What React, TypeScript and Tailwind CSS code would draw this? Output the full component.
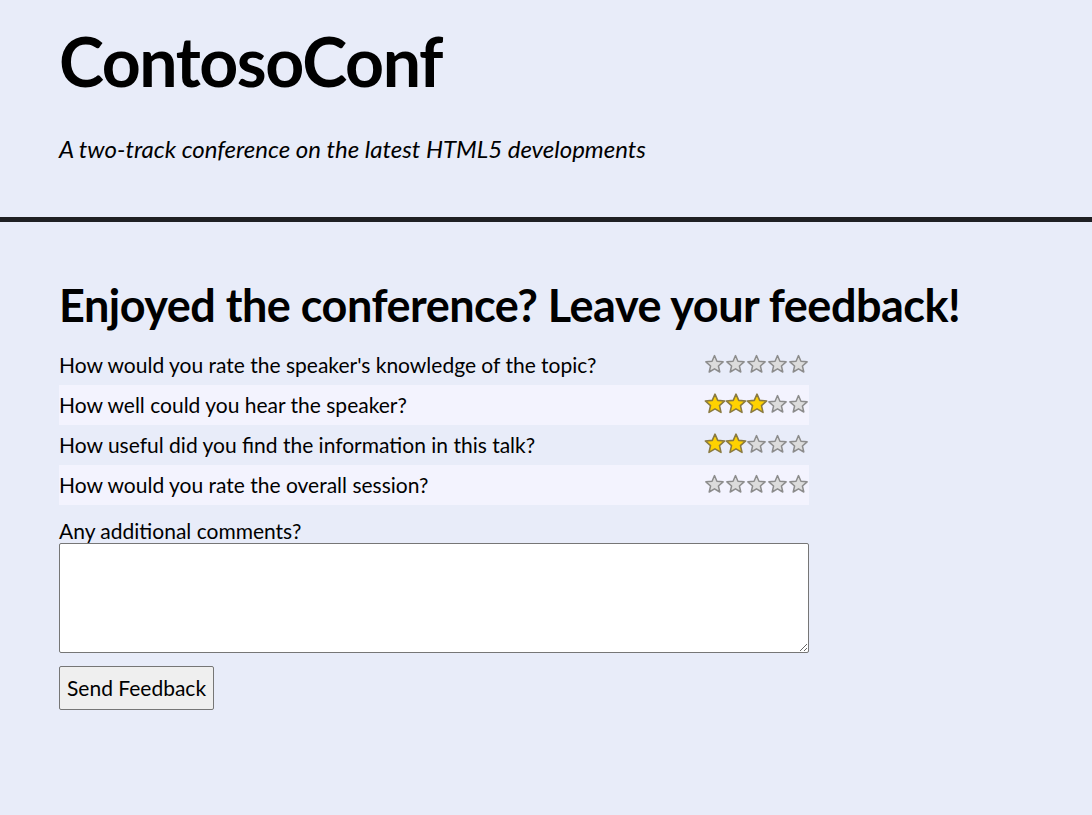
import React from "react";

function Star({ filled }: { filled: boolean }) {
  if (filled) {
    return (
      <svg width="22" height="21" viewBox="0 0 24 23" className="block -mx-[0.5px]">
        <path
          d="M12 1.2 L15 8.1 L22.6 8.7 L16.9 13.8 L18.6 21.3 L12 17.4 L5.4 21.3 L7.1 13.8 L1.4 8.7 L9 8.1 Z"
          fill="#ffd200"
          stroke="#8a7a40"
          strokeWidth="1.7"
          strokeLinejoin="round"
        />
      </svg>
    );
  }
  return (
    <svg width="21" height="20" viewBox="0 0 24 23" className="block">
      <path
        d="M12 1.8 L14.8 8.4 L21.9 9 L16.5 13.8 L18.1 20.7 L12 17 L5.9 20.7 L7.5 13.8 L2.1 9 L9.2 8.4 Z"
        fill="#dcdcdc"
        stroke="#8c8c8c"
        strokeWidth="1.7"
        strokeLinejoin="round"
      />
    </svg>
  );
}

const questions: { q: string; r: number }[] = [
  { q: "How would you rate the speaker's knowledge of the topic?", r: 0 },
  { q: "How well could you hear the speaker?", r: 3 },
  { q: "How useful did you find the information in this talk?", r: 2 },
  { q: "How would you rate the overall session?", r: 0 },
];

export default function App() {
  return (
    <div
      className="min-h-[815px] bg-[#e8ecf9] text-black"
      style={{ fontFamily: "Lato, 'Open Sans', sans-serif" }}
    >
      <header className="px-[59px] pt-[19px] pb-[53px] border-b-[5px] border-[#1f2024]">
        <h1 className="text-[68px] font-bold leading-[84px] tracking-[-1.5px]">ContosoConf</h1>
        <p className="mt-[31px] text-[24px] italic leading-[30px]">
          A two-track conference on the latest HTML5 developments
        </p>
      </header>
      <main className="px-[59px] pt-[55px]">
        <h2 className="text-[45px] font-bold leading-[56px] tracking-[-0.5px]">
          Enjoyed the conference? Leave your feedback!
        </h2>
        <div className="mt-[12px] w-[750px]">
          {questions.map((item, i) => (
            <div
              key={i}
              className={
                "flex h-[40px] items-center justify-between " +
                (i % 2 === 1 ? "bg-[#f3f3fe]" : "")
              }
            >
              <span className="text-[21px] leading-[40px]">{item.q}</span>
              <div className="flex items-center self-start h-[40px] pb-[3px]">
                {[0, 1, 2, 3, 4].map((s) => (
                  <Star key={s} filled={s < item.r} />
                ))}
              </div>
            </div>
          ))}
        </div>
        <label className="block mt-[14px] text-[21px] leading-[24px]">Any additional comments?</label>
        <textarea className="block w-[750px] h-[110px] bg-white border border-[#767676] rounded-[2px]" />
        <button className="mt-[13px] h-[44px] px-[7px] text-[21px] bg-[#efefef] border border-[#767676] rounded-[2px]">
          Send Feedback
        </button>
      </main>
    </div>
  );
}
